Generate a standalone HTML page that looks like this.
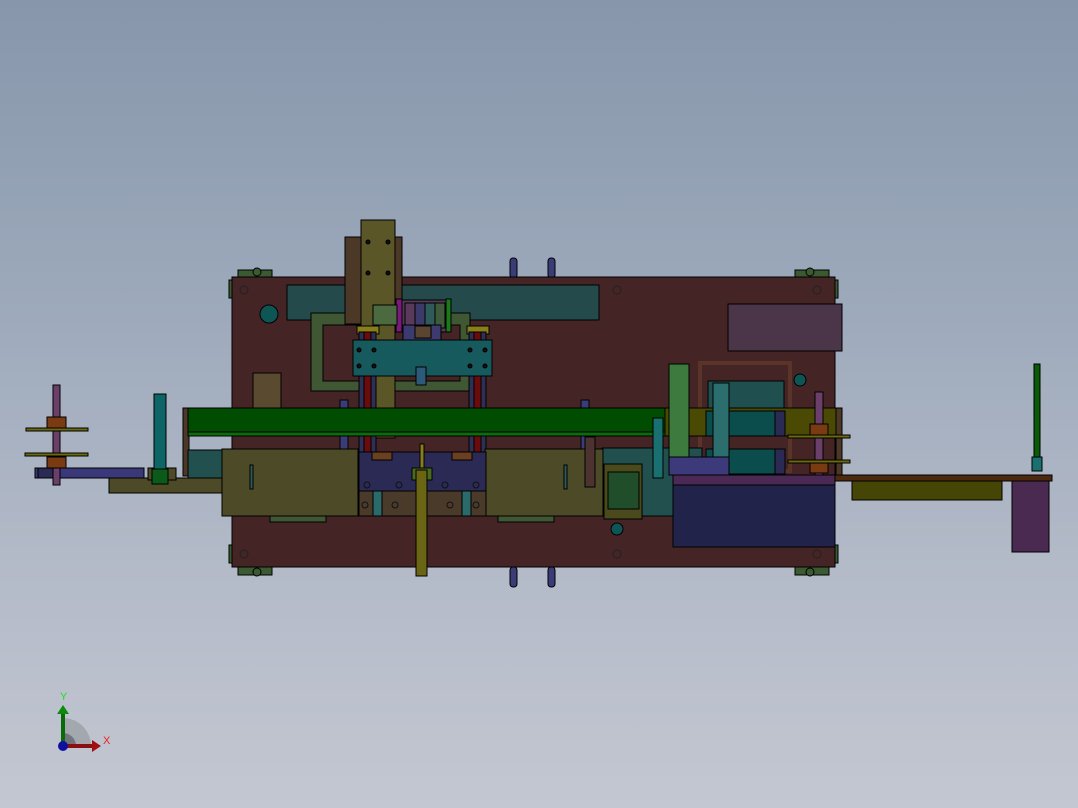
<!DOCTYPE html>
<html><head><meta charset="utf-8"><style>
html,body{margin:0;padding:0;width:1078px;height:808px;overflow:hidden}
body{background:linear-gradient(#8796ab 0%,#9ba8ba 35%,#b3bac8 70%,#c3c7d1 100%)}
svg{position:absolute;left:0;top:0}
</style></head><body>
<svg width="1078" height="808" viewBox="0 0 1078 808" xmlns="http://www.w3.org/2000/svg" stroke="#000" stroke-width="1">
<g fill="#3b5a32">
<rect x="238" y="270" width="34" height="8"/><rect x="795" y="270" width="34" height="8"/>
<rect x="238" y="567" width="34" height="8"/><rect x="795" y="567" width="34" height="8"/>
<rect x="229" y="280" width="6" height="18"/><rect x="832" y="280" width="6" height="18"/>
<rect x="229" y="545" width="6" height="18"/><rect x="832" y="545" width="6" height="18"/>
<circle cx="257" cy="272" r="4"/><circle cx="810" cy="272" r="4"/><circle cx="257" cy="572" r="4"/><circle cx="810" cy="572" r="4"/>
</g>
<g fill="#3a3c78">
<rect x="510" y="258" width="7" height="20" rx="3"/><rect x="548" y="258" width="7" height="20" rx="3"/>
<rect x="510" y="567" width="7" height="20" rx="3"/><rect x="548" y="567" width="7" height="20" rx="3"/>
</g>
<rect x="232" y="277" width="603" height="290" fill="#452425"/>
<g fill="none" stroke="#222"><circle cx="244" cy="290" r="4"/><circle cx="617" cy="290" r="4"/><circle cx="817" cy="290" r="4"/><circle cx="244" cy="554" r="4"/><circle cx="617" cy="554" r="4"/><circle cx="817" cy="554" r="4"/></g>
<circle cx="269" cy="314" r="9" fill="#0d5655"/><circle cx="800" cy="380" r="6" fill="#0d5655"/><circle cx="617" cy="529" r="6" fill="#0d5655"/>
<rect x="287" y="285" width="312" height="35" fill="#254a4c"/>
<path d="M311 313 H470 V391 H311 Z M323 325 V381 H460 V325 Z" fill="#3f5733" fill-rule="evenodd"/>
<rect x="345" y="237" width="57" height="87" fill="#4c3827"/>
<rect x="361" y="220" width="34" height="218" fill="#5a5628"/>
<rect x="728" y="304" width="114" height="47" fill="#4a3549"/>
<rect x="397" y="300" width="53" height="32" fill="#553a55"/>
<rect x="405" y="303" width="10" height="25" fill="#5a3a5a"/><rect x="415" y="303" width="10" height="25" fill="#3b3a6a"/><rect x="425" y="303" width="10" height="25" fill="#2e5a5a"/><rect x="435" y="303" width="10" height="25" fill="#3e5a3a"/>
<rect x="446" y="299" width="5" height="33" fill="#1a7a1a"/>
<rect x="396" y="299" width="6" height="33" fill="#7a1a7a"/>
<rect x="403" y="325" width="38" height="27" fill="#3c3a6e"/>
<rect x="415" y="326" width="16" height="12" fill="#5a4530"/>
<rect x="373" y="305" width="24" height="20" fill="#4c6a40"/>
<rect x="357" y="326" width="22" height="8" fill="#8a7e1c"/><rect x="467" y="326" width="22" height="8" fill="#8a7e1c"/>
<rect x="359" y="332" width="17" height="145" fill="#2d2f55"/><rect x="364" y="332" width="7" height="143" fill="#6b0c0c"/>
<rect x="469" y="332" width="17" height="145" fill="#2d2f55"/><rect x="474" y="332" width="7" height="143" fill="#6b0c0c"/>
<rect x="353" y="340" width="139" height="36" fill="#175a5d"/>
<rect x="416" y="367" width="10" height="18" fill="#2e5a7a"/>
<g fill="#111"><circle cx="359" cy="350" r="2"/><circle cx="374" cy="350" r="2"/><circle cx="470" cy="350" r="2"/><circle cx="485" cy="350" r="2"/><circle cx="359" cy="366" r="2"/><circle cx="374" cy="366" r="2"/><circle cx="470" cy="366" r="2"/><circle cx="485" cy="366" r="2"/>
<circle cx="368" cy="242" r="2"/><circle cx="388" cy="242" r="2"/><circle cx="368" cy="273" r="2"/><circle cx="388" cy="273" r="2"/></g>
<rect x="253" y="373" width="28" height="36" fill="#5a4a30"/>
<rect x="340" y="400" width="8" height="50" fill="#3a3c78"/><rect x="581" y="400" width="8" height="50" fill="#3a3c78"/>
<rect x="700" y="363" width="90" height="108" fill="none" stroke="#5a3428" stroke-width="4"/>
<rect x="708" y="381" width="76" height="30" fill="#1f4f4f"/>
<rect x="183" y="408" width="6" height="68" fill="#4c3827"/>
<rect x="188" y="408" width="480" height="27" fill="#004c00"/>
<rect x="188" y="432" width="480" height="4" fill="#0c6b0c"/>
<rect x="665" y="408" width="176" height="28" fill="#4a4a05"/>
<rect x="836" y="408" width="6" height="68" fill="#4c3827"/>
<rect x="706" y="411" width="79" height="25" fill="#0b4c4c"/><rect x="775" y="411" width="10" height="25" fill="#2a2a55"/>
<rect x="706" y="449" width="79" height="25" fill="#0b4c4c"/><rect x="775" y="449" width="10" height="25" fill="#2a2a55"/>
<rect x="602" y="448" width="100" height="68" fill="#21504f"/>
<rect x="604" y="464" width="38" height="55" fill="#4a4a1c"/><rect x="608" y="472" width="31" height="37" fill="#204e2a"/>
<rect x="815" y="392" width="8" height="100" fill="#6a3f6a"/>
<rect x="810" y="424" width="18" height="11" fill="#7a3a12"/><rect x="810" y="462" width="18" height="11" fill="#7a3a12"/>
<rect x="788" y="435" width="62" height="3" fill="#6a6a10"/><rect x="788" y="460" width="62" height="3" fill="#6a6a10"/>
<rect x="653" y="418" width="10" height="60" fill="#1a6f70"/>
<rect x="222" y="449" width="136" height="67" fill="#4c4a27"/>
<rect x="485" y="449" width="118" height="67" fill="#4c4a27"/>
<rect x="270" y="516" width="56" height="6" fill="#3f5733"/><rect x="498" y="516" width="56" height="6" fill="#3f5733"/>
<rect x="250" y="465" width="3" height="24" fill="#2a5a5a"/><rect x="564" y="465" width="3" height="24" fill="#2a5a5a"/>
<rect x="585" y="437" width="10" height="50" fill="#4c3330"/>
<rect x="359" y="452" width="127" height="40" fill="#2b2a55"/>
<rect x="359" y="491" width="127" height="25" fill="#4a3a2a"/>
<rect x="372" y="452" width="20" height="8" fill="#6a4020"/><rect x="452" y="452" width="20" height="8" fill="#6a4020"/>
<g fill="none" stroke="#111"><circle cx="367" cy="485" r="3"/><circle cx="399" cy="485" r="3"/><circle cx="445" cy="485" r="3"/><circle cx="476" cy="485" r="3"/><circle cx="365" cy="505" r="3"/><circle cx="395" cy="505" r="3"/><circle cx="450" cy="505" r="3"/><circle cx="476" cy="505" r="3"/></g>
<rect x="373" y="491" width="9" height="25" fill="#2a6a6a"/><rect x="462" y="491" width="9" height="25" fill="#2a6a6a"/>
<rect x="420" y="444" width="4" height="30" fill="#8a7e1c"/>
<rect x="412" y="468" width="20" height="12" fill="#4a6a1c"/>
<rect x="416" y="470" width="11" height="106" fill="#6a6415"/>
<rect x="669" y="364" width="20" height="93" fill="#3d7a3d"/>
<rect x="713" y="383" width="16" height="74" fill="#2c6e6e"/>
<rect x="669" y="457" width="60" height="18" fill="#3c3a7a"/>
<rect x="673" y="475" width="162" height="10" fill="#4a2a55"/>
<rect x="673" y="485" width="162" height="62" fill="#22234a"/>
<rect x="835" y="475" width="217" height="6" fill="#4c2a10"/>
<rect x="852" y="481" width="150" height="19" fill="#454505"/>
<rect x="1012" y="481" width="37" height="71" fill="#4a2a50"/>
<rect x="1034" y="364" width="6" height="106" fill="#0a5a0a"/>
<rect x="1032" y="457" width="10" height="14" fill="#1a7070"/>
<rect x="109" y="478" width="113" height="15" fill="#4c4a27"/>
<rect x="188" y="450" width="34" height="28" fill="#21504f"/>
<rect x="148" y="468" width="28" height="12" fill="#4c4a27"/>
<rect x="154" y="394" width="12" height="75" fill="#0d6565"/>
<rect x="152" y="469" width="16" height="15" fill="#0c5a1a"/>
<rect x="35" y="468" width="109" height="10" fill="#3a3878"/>
<rect x="38" y="468" width="22" height="10" fill="#2a2a55"/>
<rect x="53" y="385" width="7" height="100" fill="#6a3f6a"/>
<rect x="47" y="417" width="19" height="11" fill="#7a3a12"/><rect x="47" y="457" width="19" height="11" fill="#7a3a12"/>
<rect x="26" y="428" width="62" height="3" fill="#6a6a10"/><rect x="25" y="453" width="63" height="3" fill="#6a6a10"/>
<g stroke="none">
<path d="M63 746 V718 A28 28 0 0 1 91 746 Z" fill="#a3a7ae"/>
<path d="M63 746 V733 A13 13 0 0 1 76 746 Z" fill="#70747c"/>
<rect x="61" y="712" width="4" height="34" fill="#0a6a0a"/>
<path d="M57 714 L63 705 L69 714 Z" fill="#0c8a0c"/>
<rect x="63" y="744" width="30" height="4" fill="#8a1010"/>
<path d="M92 740 L101 746 L92 752 Z" fill="#a01010"/>
<circle cx="63" cy="746" r="5" fill="#1010a0"/>
</g>
<text x="60" y="700" font-family="Liberation Sans, sans-serif" font-size="11" fill="#22dd22" stroke="none">Y</text>
<text x="103" y="744" font-family="Liberation Sans, sans-serif" font-size="11" fill="#ee2222" stroke="none">X</text>
</svg>
</body></html>
